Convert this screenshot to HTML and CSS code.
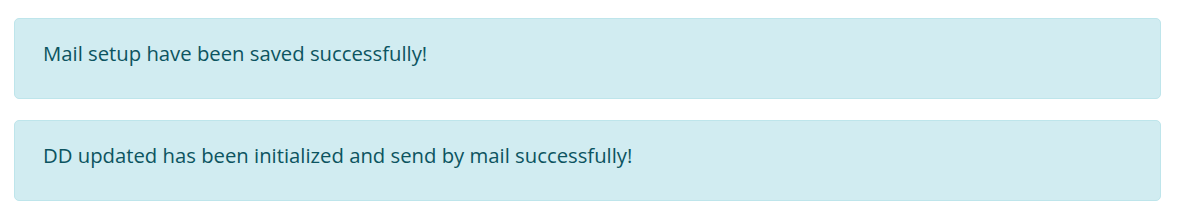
FILE: index.html
```html
<!DOCTYPE html>
<html lang="en">

<head>
    <meta charset="UTF-8">
    <meta name="viewport" content="width=device-width, initial-scale=1.0">
    <title>Mail setup</title>
    <link rel="stylesheet" href="styles.css">
</head>

<body>
    <div class="messages">
        <div class="alert alert-info">Mail setup have been saved successfully!</div>
        <div class="alert alert-info">DD updated has been initialized and send by mail successfully!</div>
    </div>
</body>

</html>
```

FILE: styles.css
```css
body {
    font-family: "Open Sans", "Noto Sans", sans-serif;
    margin: 0;
    padding: 18px 26px 0 14px;
    background-color: #fff;
}

.messages {
    display: flex;
    flex-direction: column;
    gap: 21px;
}

.alert {
    padding: 19px 28px 30px 28px;
    font-size: 20.3px;
    line-height: 30px;
    border: 1px solid #bee5eb;
    border-radius: 5px;
}

.alert-info {
    background-color: #d1ecf1;
    color: #0c5460;
}
```
